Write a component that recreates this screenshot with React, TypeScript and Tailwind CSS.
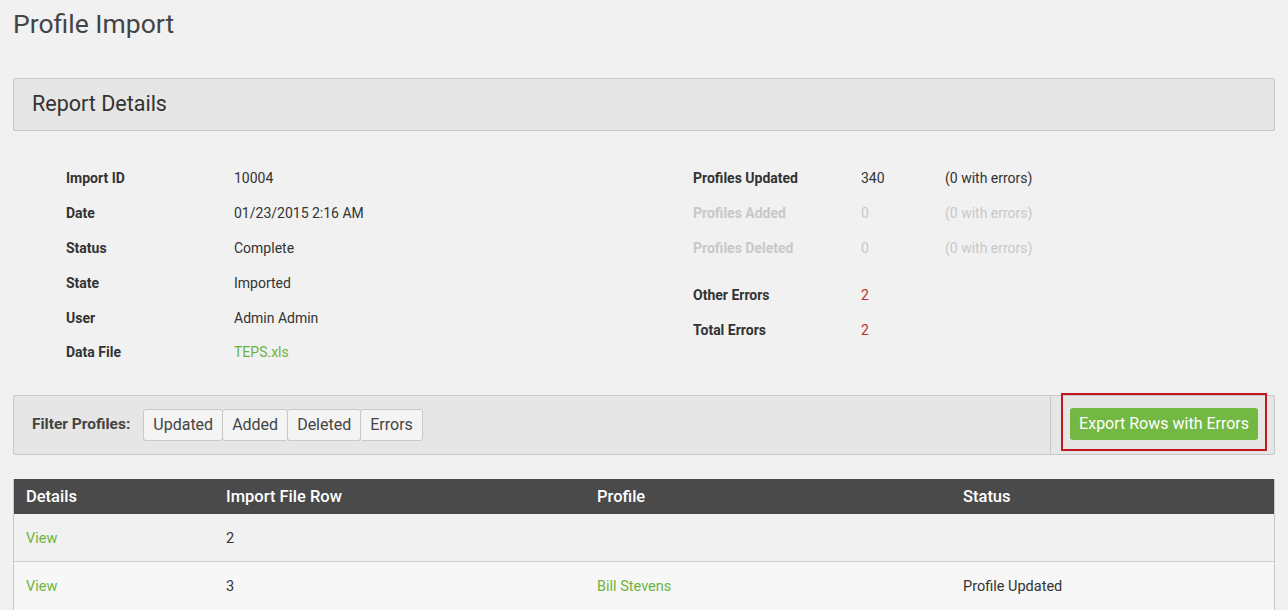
export default function App() {
  const left = [
    ['Import ID', '10004'],
    ['Date', '01/23/2015 2:16 AM'],
    ['Status', 'Complete'],
    ['State', 'Imported'],
    ['User', 'Admin Admin'],
  ];

  return (
    <div className="min-h-[610px] bg-[#f1f1f1] px-[13px] pt-[8px] text-[#333] font-['Roboto',sans-serif]">
      <h1 className="text-[26.5px] leading-[32px] text-[#444]">Profile Import</h1>

      <div className="mt-[38px] h-[53px] flex items-center px-[18px] bg-[#e6e6e6] border border-[#c8c8c8] rounded-[2px]">
        <h2 className="text-[21.5px] text-[#333]">Report Details</h2>
      </div>

      <div className="flex pt-[37px] h-[264px]">
        <div className="w-[680px] pl-[53px] text-[14px]">
          {left.map(([k, v]) => (
            <div key={k} className="flex h-[35px]">
              <div className="w-[168px] font-bold">{k}</div>
              <div>{v}</div>
            </div>
          ))}
          <div className="flex h-[35px] -mt-px">
            <div className="w-[168px] font-bold">Data File</div>
            <a className="text-[#6db33f]">TEPS.xls</a>
          </div>
        </div>
        <div className="text-[14px]">
          <div className="flex h-[35px]">
            <div className="w-[168px] font-bold">Profiles Updated</div>
            <div className="w-[84px]">340</div>
            <div>(0 with errors)</div>
          </div>
          <div className="flex h-[35px] text-[#c8c8c8]">
            <div className="w-[168px] font-bold">Profiles Added</div>
            <div className="w-[84px]">0</div>
            <div>(0 with errors)</div>
          </div>
          <div className="flex h-[47px] text-[#c8c8c8]">
            <div className="w-[168px] font-bold">Profiles Deleted</div>
            <div className="w-[84px]">0</div>
            <div>(0 with errors)</div>
          </div>
          <div className="flex h-[35px]">
            <div className="w-[168px] font-bold">Other Errors</div>
            <div className="text-[#c0302c]">2</div>
          </div>
          <div className="flex h-[35px]">
            <div className="w-[168px] font-bold">Total Errors</div>
            <div className="text-[#c0302c]">2</div>
          </div>
        </div>
      </div>

      <div className="h-[60px] flex bg-[#e6e6e6] border border-[#c8c8c8] rounded-[2px]">
        <div className="flex-1 flex items-center pl-[18px] border-r border-[#c8c8c8]">
          <span className="font-bold text-[15.5px] text-[#444] mr-[13px]">Filter Profiles:</span>
          <div className="flex">
            {['Updated', 'Added', 'Deleted', 'Errors'].map((b, i) => (
              <button
                key={b}
                className={`h-[32px] px-[9px] bg-[#f4f4f4] border border-[#c8c8c8] text-[16px] text-[#444] rounded-[3px] ${i > 0 ? '-ml-px' : ''}`}
              >
                {b}
              </button>
            ))}
          </div>
        </div>
        <div className="flex items-start justify-end pl-[10px] pr-[7px]">
          <div className="-mt-[3px] border-2 border-[#c1171f] px-[7px] pt-[13px] pb-[9px]">
            <button className="h-[32px] px-[9px] bg-[#73b843] text-white text-[16px] rounded-[3px]">
              Export Rows with Errors
            </button>
          </div>
        </div>
      </div>

      <div className="mt-[24px] border-x border-[#c8c8c8] text-[14.5px]">
        <div className="flex h-[35px] pt-[2px] items-center bg-[#4a4a4a] text-white text-[16.5px] font-medium">
          <div className="w-[200px] pl-[12px]">Details</div>
          <div className="w-[371px] pl-[12px]">Import File Row</div>
          <div className="w-[366px] pl-[12px]">Profile</div>
          <div className="flex-1 pl-[12px]">Status</div>
        </div>
        <div className="flex h-[48px] pt-[2px] items-center bg-[#f1f1f1] border-b border-[#cfcfcf]">
          <div className="w-[200px] pl-[12px] text-[#6db33f]">View</div>
          <div className="w-[371px] pl-[12px]">2</div>
          <div className="w-[366px] pl-[12px]"></div>
          <div className="flex-1 pl-[12px]"></div>
        </div>
        <div className="flex h-[48px] pt-[2px] items-center bg-[#f7f7f7]">
          <div className="w-[200px] pl-[12px] text-[#6db33f]">View</div>
          <div className="w-[371px] pl-[12px]">3</div>
          <div className="w-[366px] pl-[12px] text-[#6db33f]">Bill Stevens</div>
          <div className="flex-1 pl-[12px]">Profile Updated</div>
        </div>
      </div>
    </div>
  );
}
